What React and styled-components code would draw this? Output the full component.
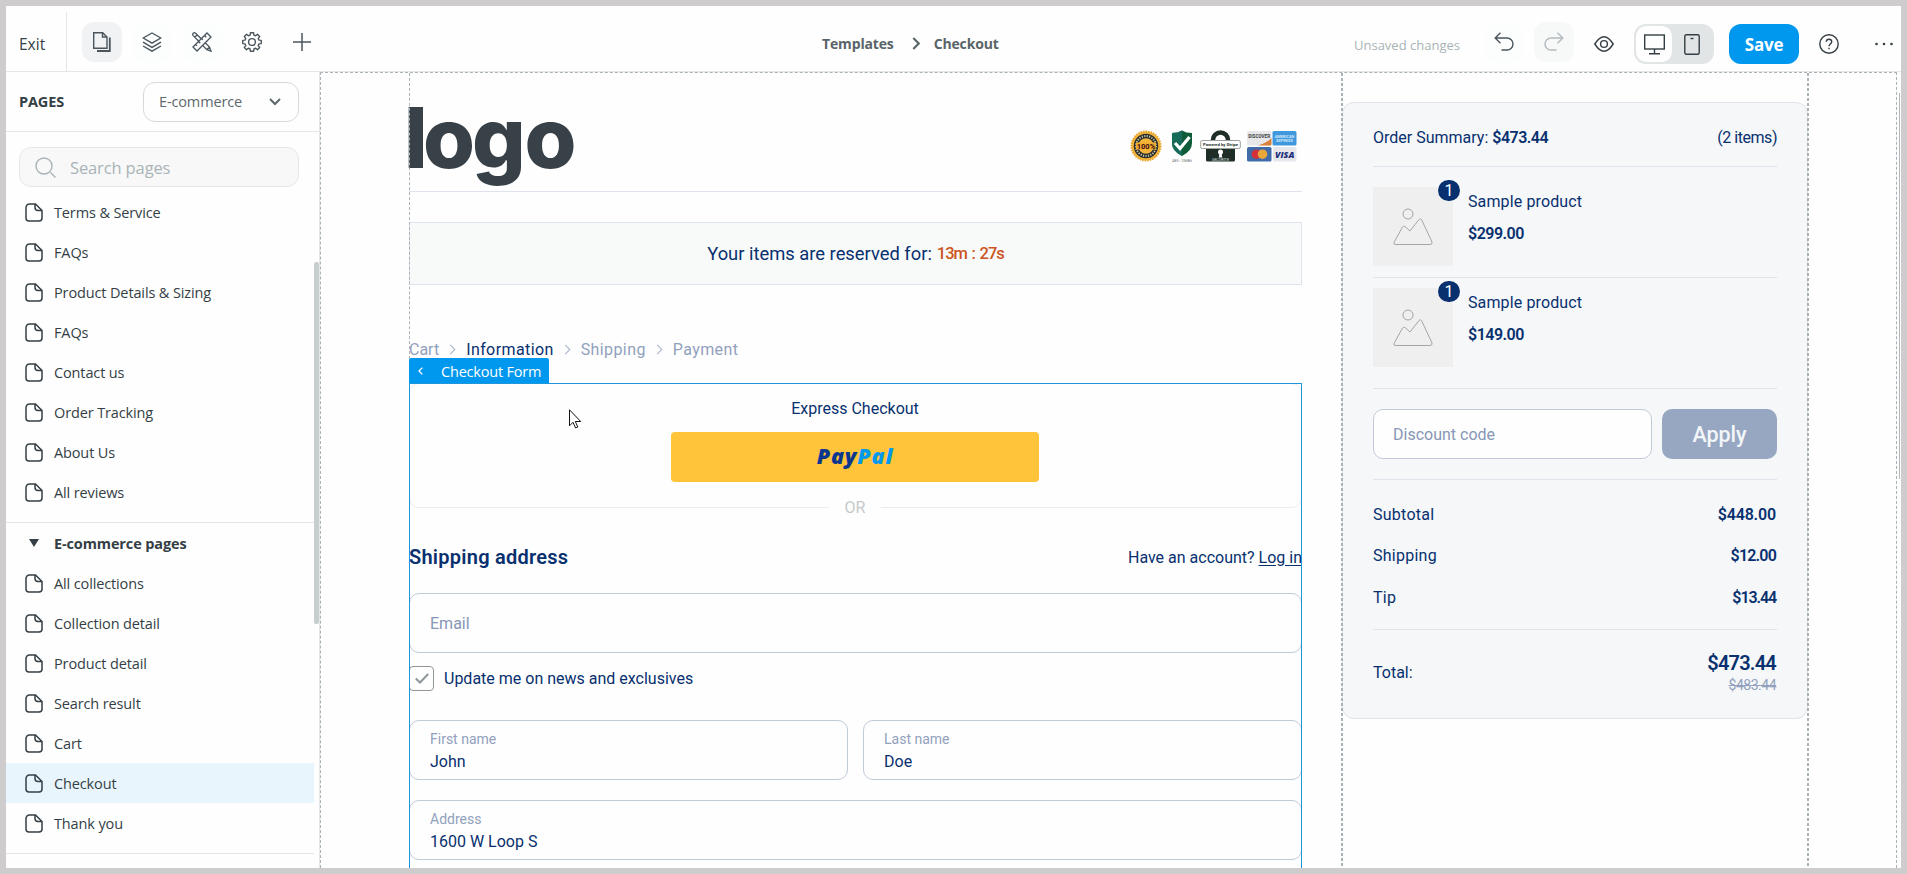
import React from "react";
import styled, { createGlobalStyle } from "styled-components";

const ui = `"Open Sans", "Noto Sans", sans-serif`;
const shop = `Roboto, "Noto Sans", sans-serif`;
const c = {
  ink: "#343f45",
  icon: "#4b565c",
  line: "#e4e6e8",
  dash: "#a9b2b6",
  blue: "#0097ee",
  navy: "#08306f",
  muted: "#91a1bd",
  field: "#c1cad9",
  rule: "#dfe3ec",
};

const Global = createGlobalStyle`
  *, *::before, *::after { box-sizing: border-box; }
  body { margin: 0; background: #cfcccd; font-family: ${ui}; color: ${c.ink}; overflow: hidden; }
  svg { display: block; flex: none; }
`;

const Frame = styled.div`
  width: 1907px;
  height: 874px;
  padding: 6px;
  background: #cfcccd;
`;
const Window = styled.div`
  display: flex;
  flex-direction: column;
  width: 1895px;
  height: 862px;
  background: #fefefe;
  overflow: hidden;
`;

/* top bar */
const TopBar = styled.header`
  display: flex;
  flex: none;
  height: 66px;
  border-bottom: 1px solid ${c.line};
`;
const Exit = styled.div`
  width: 61px;
  margin-top: 6px;
  padding: 20px 0 0 13px;
  border-right: 1px solid ${c.line};
  font-size: 15.5px;
  line-height: 24px;
`;
const Tools = styled.nav`
  display: flex;
  gap: 10px;
  margin: 16px 0 0 15px;
`;
const ToolButton = styled.div`
  display: flex;
  align-items: center;
  justify-content: center;
  width: 40px;
  height: 40px;
  border-radius: 12px;
  color: ${(p) => p.$color || c.icon};
  background: ${(p) => p.$bg || "transparent"};
`;
const Path = styled.div`
  display: flex;
  align-items: center;
  height: 24px;
  margin: 25px 0 0 500px;
  font-size: 14px;
  font-weight: 700;
  letter-spacing: -0.15px;
  color: #596469;
  svg { margin: 0 14px 0 18px; }
`;
const Actions = styled.div`
  display: flex;
  align-items: center;
  height: 40px;
  margin: 18px 8px 0 auto;
`;
const Unsaved = styled.span`
  width: 130px;
  padding-top: 2px;
  font-size: 13px;
  color: #a9b4b7;
`;
const History = styled.div`
  display: flex;
  gap: 10px;
  margin: -5px 20px 0 0;
`;
const Devices = styled.div`
  display: flex;
  align-items: center;
  width: 80px;
  height: 40px;
  margin: 0 15px 0 20px;
  padding: 2px;
  border-radius: 12px;
  background: #e1e5e6;
  color: ${c.ink};
`;
const Device = styled.div`
  display: flex;
  align-items: center;
  justify-content: center;
  width: ${(p) => (p.$on ? 36 : 40)}px;
  height: 36px;
  border-radius: 10px;
  background: ${(p) => (p.$on ? "#fefefe" : "transparent")};
`;
const Save = styled.div`
  width: 70px;
  height: 40px;
  margin-right: 20px;
  border-radius: 12px;
  background: ${c.blue};
  color: #fff;
  font-size: 17px;
  font-weight: 700;
  letter-spacing: -0.2px;
  line-height: 41px;
  text-align: center;
`;
const More = styled.div`
  margin-left: 36px;
`;

/* sidebar */
const Body = styled.div`
  display: flex;
  flex: 1;
  min-height: 0;
`;
const Sidebar = styled.aside`
  flex: none;
  width: 314px;
  border-right: 1px solid ${c.line};
  font-size: 14.5px;
  letter-spacing: -0.13px;
`;
const SideHead = styled.div`
  display: flex;
  align-items: center;
  justify-content: space-between;
  height: 60px;
  padding: 0 20px 0 13px;
  border-bottom: 1px solid ${c.line};
  strong { font-weight: 700; }
`;
const Select = styled.div`
  display: flex;
  align-items: center;
  justify-content: space-between;
  width: 156px;
  height: 40px;
  padding: 0 17px 0 15px;
  border: 1px solid #d6d9dc;
  border-radius: 12px;
  color: #5d686d;
`;
const Search = styled.div`
  display: flex;
  align-items: center;
  gap: 14px;
  width: 280px;
  height: 40px;
  margin: 15px 0 5px 13px;
  padding-left: 15px;
  border: 1px solid #e4e7e8;
  border-radius: 12px;
  background: #f8f8f8;
  font-size: 16.5px;
  color: #a9b4b7;
`;
const ListArea = styled.div`
  display: flex;
`;
const Lists = styled.div`
  width: 308px;
`;
const PageList = styled.div`
  padding-bottom: 10px;
  border-bottom: 1px solid ${c.line};
`;
const PageRow = styled.div`
  display: flex;
  align-items: center;
  gap: 11px;
  height: 40px;
  padding-left: 19px;
  background: ${(p) => (p.$active ? "#e8f5fd" : "transparent")};
  font-weight: ${(p) => (p.$group ? 700 : 400)};
`;
const SideThumb = styled.div`
  width: 5px;
  height: 362px;
  margin-top: 70px;
  border-radius: 2px;
  background: #c8cdd0;
`;

/* canvas */
const Canvas = styled.main`
  display: flex;
  flex: none;
  width: 1577px;
  padding-left: 88px;
  border: 1px dashed ${c.dash};
  border-bottom: 0;
  overflow: hidden;
  font-family: ${shop};
  font-size: 16px;
  color: ${c.navy};
`;
const CanvasScroll = styled.div`
  width: 1px;
  height: 386px;
  margin: 21px 0 0 2px;
  background: #b4b8ba;
`;
const Column = styled.section`
  position: relative;
  width: 893px;
  flex: none;
  &::after {
    content: "";
    position: absolute;
    left: 0;
    top: 0;
    height: 286px;
    border-left: 1px dashed ${c.dash};
  }
`;
const StoreHeader = styled.div`
  display: flex;
  justify-content: space-between;
  height: 119px;
  border-bottom: 1px solid ${c.rule};
  > svg { overflow: visible; }
`;
const Trust = styled.div`
  display: flex;
  align-items: flex-start;
  padding: 57px 5px 0 0;
`;
const Spacer = styled.div`
  width: ${(p) => p.$w}px;
`;
const Timer = styled.div`
  display: flex;
  align-items: center;
  justify-content: center;
  gap: 5px;
  height: 63px;
  margin-top: 30px;
  border: 1px solid ${c.rule};
  background: #f8fafa;
  font-size: 18.35px;
  b {
    font-size: 16.5px;
    font-weight: 500;
    letter-spacing: -1px;
    word-spacing: 1.5px;
    color: #cb5420;
  }
`;
const Steps = styled.div`
  display: flex;
  align-items: center;
  height: 25px;
  margin-top: 52px;
  color: ${c.muted};
  b { font-weight: 450; color: ${c.navy}; letter-spacing: 0.4px; }
  span { letter-spacing: 0.4px; }
  svg { margin: 0 10px; }
`;
const Form = styled.div`
  position: relative;
  height: 500px;
  margin-top: 21px;
  &::after {
    content: "";
    position: absolute;
    inset: 0;
    border: 1px solid #1e96dc;
  }
`;
const Tag = styled.div`
  position: absolute;
  left: 0;
  top: -25px;
  display: flex;
  align-items: center;
  gap: 18px;
  width: 140px;
  height: 26px;
  padding-left: 9px;
  border-radius: 2px 2px 0 0;
  background: ${c.blue};
  color: #fff;
  font: 14.5px ${ui};
  letter-spacing: -0.2px;
  white-space: nowrap;
`;
const Express = styled.div`
  position: relative;
  display: flex;
  flex-direction: column;
  align-items: center;
  height: 125px;
  padding: 15px 1px 0 0;
  border: 1px solid #ececee;
  border-radius: 10px;
  line-height: 20px;
`;
const PayPal = styled.div`
  width: 368px;
  height: 50px;
  margin-top: 13px;
  border-radius: 4px;
  background: #ffc439;
  color: #0b3690;
  font: italic 800 21.5px/47px "Open Sans", sans-serif;
  letter-spacing: 0.8px;
  text-align: center;
  span { color: #0099ec; }
`;
const Or = styled.div`
  position: absolute;
  left: 419px;
  bottom: -11px;
  width: 52px;
  background: #fefefe;
  color: #c5c9ca;
  text-align: center;
`;
const AddressHead = styled.div`
  display: flex;
  align-items: center;
  justify-content: space-between;
  height: 85px;
  padding-top: 13px;
  h2 { margin: 0; font-size: 20px; font-weight: 600; letter-spacing: 0.25px; }
  u { text-underline-offset: 2px; }
`;
const Field = styled.div`
  display: flex;
  flex-direction: column;
  justify-content: center;
  flex: 1;
  height: 60px;
  padding: 1px 20px 0;
  border: 1px solid ${c.field};
  border-radius: 10px;
  line-height: 23px;
  color: ${(p) => (p.$empty ? "#8797b5" : c.navy)};
  small { font-size: 14px; line-height: 22px; color: ${c.muted}; }
`;
const FieldRow = styled.div`
  display: flex;
  gap: 15px;
  margin-top: ${(p) => p.$top}px;
`;
const CheckRow = styled.div`
  display: flex;
  align-items: center;
  gap: 10px;
  height: 25px;
  margin-top: 13px;
`;
const CheckBox = styled.div`
  display: flex;
  align-items: center;
  justify-content: center;
  width: 25px;
  height: 25px;
  border: 1px solid #8f979b;
  border-radius: 4px;
`;
const Pointer = styled.div`
  position: absolute;
  left: 160px;
  top: 26px;
`;

/* order summary */
const SummaryPane = styled.section`
  position: relative;
  flex: none;
  width: 468px;
  margin-left: 39px;
  padding: 29px 1px 0;
  &::before,
  &::after {
    content: "";
    position: absolute;
    top: 0;
    bottom: 0;
    width: 2px;
    background: repeating-linear-gradient(${c.dash} 0 3px, transparent 3px 5px);
  }
  &::before { left: 0; }
  &::after { right: 0; }
`;
const Card = styled.div`
  height: 617px;
  padding: 0 30px;
  border: 1px solid #e0e4e8;
  border-radius: 12px;
  background: #f5f7f9;
`;
const Row = styled.div`
  display: flex;
  justify-content: space-between;
  align-items: center;
  height: ${(p) => p.$h}px;
  padding: ${(p) => p.$pt || 0}px 1px ${(p) => p.$pb || 0}px 0;
`;
const ItemCount = styled.span`
  margin-right: -1px;
  letter-spacing: -0.45px;
`;
const Rule = styled.div`
  height: 1px;
  background: #dfe3eb;
`;
const Money = styled.b`
  font-size: ${(p) => p.$size || 16}px;
  font-weight: 600;
  letter-spacing: ${(p) => p.$track ?? -0.5}px;
`;
const Product = styled.div`
  display: flex;
  gap: 15px;
  padding: ${(p) => p.$pad};
`;
const Thumb = styled.div`
  position: relative;
  display: flex;
  align-items: center;
  justify-content: center;
  width: 80px;
  height: 79px;
  background: #efefef;
`;
const Count = styled.span`
  position: absolute;
  right: -7px;
  top: -7px;
  width: 22px;
  height: 21px;
  border-radius: 11px;
  background: ${c.navy};
  color: #fff;
  line-height: 21px;
  text-align: center;
`;
const ProductText = styled.div`
  display: flex;
  flex-direction: column;
  gap: 12px;
  padding-top: 5px;
  line-height: 20px;
  letter-spacing: 0.12px;
`;
const Discount = styled.div`
  display: flex;
  gap: 10px;
  height: 90px;
  padding: 20px 0;
`;
const CodeInput = styled.div`
  width: 279px;
  height: 50px;
  padding-left: 19px;
  border: 1px solid ${c.field};
  border-radius: 10px;
  background: #fefefe;
  color: #8797b5;
  line-height: 49px;
`;
const Apply = styled.div`
  flex: 1;
  border-radius: 10px;
  background: #97a7c1;
  color: #f3f6f9;
  font-size: 21.5px;
  font-weight: 500;
  line-height: 51px;
  text-align: center;
`;
const Label = styled.span`
  letter-spacing: 0.25px;
`;
const Totals = styled.div`
  display: flex;
  flex-direction: column;
  align-items: flex-end;
  s { font-size: 14px; letter-spacing: -0.5px; line-height: 20px; color: ${c.muted}; }
`;

const Svg = ({ w, h = w, vb, sw = 1.4, children }) => (
  <svg width={w} height={h} viewBox={vb || `0 0 ${w} ${h}`} fill="none" stroke="currentColor" strokeWidth={sw}>
    {children}
  </svg>
);

const FileIcon = () => (
  <Svg w={18} h={19} sw={1.5}>
    <path d="M4.5 1h6L17 7.5V15a3 3 0 0 1-3 3H4a3 3 0 0 1-3-3V4.5A3.5 3.5 0 0 1 4.5 1Z" />
    <path d="M10 1v3.5A3 3 0 0 0 13 7.5h4" />
  </Svg>
);
const Chevron = ({ color, w = 7, h = 11, sw = 1.2 }) => (
  <svg width={w} height={h} viewBox="0 0 7 12" fill="none" stroke={color} strokeWidth={sw}>
    <path d="M1 1l5 5-5 5" />
  </svg>
);
const PicIcon = () => (
  <svg width="40" height="38" viewBox="0 0 40 38" fill="none" stroke="#a3a5a6" strokeWidth="1">
    <circle cx="15" cy="6" r="5" />
    <path d="M1 34.5 9.5 19q1-1.5 2.5-.5l5 4.5L26 11.5q1.5-1.5 2.5 0L39 34q.5 2.5-2 2.5H3Q0 36.5 1 34.5Z" />
  </svg>
);

const gearPath = (() => {
  const pts = [];
  for (let i = 0; i < 8; i++) {
    const a = (i * Math.PI) / 4;
    [[-0.27, 7.2], [-0.17, 9.4], [0.17, 9.4], [0.27, 7.2]].forEach(([d, r]) =>
      pts.push(`${(10 + r * Math.sin(a + d)).toFixed(2)} ${(10 - r * Math.cos(a + d)).toFixed(2)}`)
    );
  }
  return `M${pts.join("L")}Z`;
})();

const Guarantee = () => (
  <svg width="32" height="32" viewBox="0 0 32 32">
    <circle cx="16" cy="16" r="14.5" fill="#f4b63a" stroke="#e9a42c" strokeWidth="2" strokeDasharray="1.5 1" />
    <circle cx="16" cy="16" r="10" fill="none" stroke="#2b2f2c" strokeWidth="4.5" />
    <circle cx="16" cy="16" r="10" fill="none" stroke="#c8c3a8" strokeWidth="2" strokeDasharray="1.2 1.3" />
    <rect x="6" y="12.5" width="20" height="7" fill="#f0ad31" />
    <text x="16" y="18.7" fontSize="7.5" fontWeight="800" textAnchor="middle" fill="#4b1616" fontFamily="Roboto">100%</text>
  </svg>
);
const Shield = () => (
  <svg width="22" height="32" viewBox="0 0 22 32">
    <path d="M1 3q6 0 10-2.5Q15 3 21 3v10q0 8-10 13Q1 21 1 13Z" fill="#0f5c3a" />
    <path d="M1 3q6 0 10-2.5V26Q1 21 1 13Z" fill="#176b5a" />
    <path d="M4 13l5 5.5L18.5 7" fill="none" stroke="#fff" strokeWidth="3.2" />
    <text x="11" y="31.5" fontSize="3.6" textAnchor="middle" fill="#666" fontFamily="Roboto">AES - 256Bit</text>
  </svg>
);
const Lock = () => (
  <svg width="41" height="32" viewBox="0 0 41 32">
    <path d="M13 13v-3a7.5 7.5 0 0 1 15 0v3" fill="none" stroke="#1f2e27" strokeWidth="4.5" />
    <rect x="6" y="15" width="29" height="16.5" rx="1.5" fill="#1f2e27" />
    <rect x=".7" y="10.5" width="39.6" height="8" rx="1.5" fill="#fff" stroke="#9aa19d" />
    <text x="20.5" y="16.3" fontSize="4.3" fontWeight="700" textAnchor="middle" fill="#26332d" fontFamily="Roboto">Powered by Stripe</text>
    <circle cx="20.5" cy="22" r="2.5" fill="#fff" />
    <path d="M19.5 22h2l.7 5.5h-3.4Z" fill="#fff" />
    <text x="20.5" y="31" fontSize="3.8" textAnchor="middle" fill="#dfe5e1" fontFamily="Roboto">SECURITE</text>
  </svg>
);
const Cards = () => (
  <svg width="50" height="32" viewBox="0 0 50 32">
    <rect x="0" y="1" width="24.5" height="14.5" rx="1.5" fill="#e7e7ea" />
    <path d="M24.5 8v6q0 1.5-1.5 1.5H11Q20 13 24.5 8Z" fill="#d9803a" />
    <text x="12.2" y="7.7" fontSize="4.6" fontWeight="700" textAnchor="middle" fill="#3b3b42" fontFamily="Roboto">DISCOVER</text>
    <rect x="25.5" y="1" width="24" height="14.5" rx="1.5" fill="#3f97dc" />
    <text x="37.5" y="8" fontSize="3.9" fontWeight="700" textAnchor="middle" fill="#d2eafb" fontFamily="Roboto">AMERICAN</text>
    <text x="37.5" y="12.3" fontSize="3.9" fontWeight="700" textAnchor="middle" fill="#d2eafb" fontFamily="Roboto">EXPRESS</text>
    <rect x="0" y="17" width="24.5" height="14.5" rx="1.5" fill="#3f6ca8" />
    <circle cx="9.3" cy="24.2" r="4.8" fill="#d2303a" />
    <circle cx="15.5" cy="24.2" r="4.8" fill="#eba63a" />
    <rect x="26" y="17" width="23.5" height="14.5" rx="1.5" fill="#e6e7ec" />
    <text x="37.7" y="27.5" fontSize="8.8" fontStyle="italic" fontWeight="800" textAnchor="middle" fill="#1d2f7a" fontFamily="Open Sans">VISA</text>
  </svg>
);

const pages = ["Terms & Service", "FAQs", "Product Details & Sizing", "FAQs", "Contact us", "Order Tracking", "About Us", "All reviews"];
const shopPages = ["All collections", "Collection detail", "Product detail", "Search result", "Cart", "Checkout", "Thank you"];

const Item = ({ price }) => (
  <>
    <Thumb><PicIcon /><Count>1</Count></Thumb>
    <ProductText><span>Sample product</span><Money>{price}</Money></ProductText>
  </>
);

export default function App() {
  return (
    <Frame>
      <Global />
      <Window>
        <TopBar>
          <Exit>Exit</Exit>
          <Tools>
            <ToolButton $bg="#f0f2f4">
              <Svg w={18} h={20}>
                <path d="M.7.7h9L14 5v11.300H.7Z" /><path d="M9.5.7V5H14" /><path d="M16.8 5.5V19H4" strokeWidth="1.8" />
              </Svg>
            </ToolButton>
            <ToolButton $bg="#fcfefe">
              <Svg w={20}>
                <path d="M10 1l8.8 5L10 11.2 1.2 6Z" /><path d="M1 10.2l9 5.2 9-5.2" /><path d="M1 14l9 5.2 9-5.2" />
              </Svg>
            </ToolButton>
            <ToolButton $bg="#fcfefe">
              <Svg w={20} sw={1.3}>
                <path d="M1 15l14-14 4 4L5 19ZM12.5 3.5l1.8 1.8M9.500 6.500l1.300 1.300M6.500 9.500l1.800 1.800M3.500 12.500l1.300 1.300" />
                <path d="M6.800 9.200L1.200 3.600a1.700 1.700 0 0 1 2.400-2.400L9.200 6.800M13.200 10.800l4.300 4.300 1.500 4.100-4.100-1.500-4.300-4.300M2.800 5.200l2.400-2.400M14.900 17.500l2.600-2.400" />
              </Svg>
            </ToolButton>
            <ToolButton>
              <Svg w={20}><path d={gearPath} strokeLinejoin="round" /><circle cx="10" cy="10" r="3.4" /></Svg>
            </ToolButton>
            <ToolButton>
              <Svg w={18} sw={1.5}><path d="M9 0v18M0 9h18" /></Svg>
            </ToolButton>
          </Tools>
          <Path>
            Templates
            <Chevron color="#596469" sw={1.9} w={8} h={13} />
            Checkout
          </Path>
          <Actions>
            <Unsaved>Unsaved changes</Unsaved>
            <History>
              <ToolButton $bg="#fcfefe">
                <Svg w={20}><path d="M6.5.8L1.2 6l5.300 5.200M1.200 6H13a6 6 0 0 1 0 12H7.500" /></Svg>
              </ToolButton>
              <ToolButton $bg="#f7f8f8" $color="#b3bbbe">
                <Svg w={20}><path d="M13.5.8L18.8 6l-5.300 5.200M18.800 6H7a6 6 0 0 0 0 12h5.500" /></Svg>
              </ToolButton>
            </History>
            <Svg w={20} h={16}><path d="M.8 8Q10-6.500 19.200 8 10 22.500.8 8Z" /><circle cx="10" cy="8" r="3.4" /></Svg>
            <Devices>
              <Device $on>
                <Svg w={21} h={21}><rect x=".7" y="1" width="19.6" height="14" /><path d="M10.5 15v4.500M5 19.700h11" /></Svg>
              </Device>
              <Device>
                <Svg w={16} h={21}><rect x=".8" y=".8" width="14.4" height="19.4" rx="1.5" /><path d="M6.5 4.500h3" /></Svg>
              </Device>
            </Devices>
            <Save>Save</Save>
            <Svg w={20}>
              <circle cx="10" cy="10" r="9.2" />
              <path d="M7.3 7.8Q7.4 5.2 10 5.2t2.700 2.500c0 2.200-2.700 2.300-2.700 4.500M10 13.700v1.500" />
            </Svg>
            <More>
              <svg width="18" height="4" viewBox="0 0 18 4" fill={c.ink}>
                <circle cx="1.5" cy="2" r="1.3" /><circle cx="9" cy="2" r="1.3" /><circle cx="16.5" cy="2" r="1.3" />
              </svg>
            </More>
          </Actions>
        </TopBar>
        <Body>
          <Sidebar>
            <SideHead>
              <strong>PAGES</strong>
              <Select>
                E-commerce
                <Svg w={12} h={8} sw={2}><path d="M1 1l5 5 5-5" /></Svg>
              </Select>
            </SideHead>
            <Search>
              <Svg w={21}><circle cx="9" cy="9" r="8" /><path d="M15.5 15.5l5 5" /></Svg>
              Search pages
            </Search>
            <ListArea>
              <Lists>
                <PageList>
                  {pages.map((p, i) => <PageRow key={i}><FileIcon />{p}</PageRow>)}
                </PageList>
                <PageList>
                  <PageRow $group>
                    <svg width="18" height="8" viewBox="0 0 18 8" fill={c.ink}><path d="M4 0h10L9 8Z" /></svg>
                    E-commerce pages
                  </PageRow>
                  {shopPages.map((p) => <PageRow key={p} $active={p === "Checkout"}><FileIcon />{p}</PageRow>)}
                </PageList>
              </Lists>
              <SideThumb />
            </ListArea>
          </Sidebar>
          <Canvas>
            <Column>
              <StoreHeader>
                <svg width="170" height="118" viewBox="0 0 170 118">
                  <text x="-5 14 63 115.5" y="95" fontFamily="Inter" fontWeight="800" fontSize="84" fill="#384147">logo</text>
                </svg>
                <Trust>
                  <Guarantee />
                  <Spacer $w={9} /><Shield />
                  <Spacer $w={7} /><Lock />
                  <Spacer $w={6} /><Cards />
                </Trust>
              </StoreHeader>
              <Timer>Your items are reserved for: <b>13m : 27s</b></Timer>
              <Steps>
                Cart<Chevron color="#aab7cc" />
                <b>Information</b><Chevron color="#aab7cc" />
                <span>Shipping</span><Chevron color="#aab7cc" /><span>Payment</span>
              </Steps>
              <Form>
                <Express>
                  Express Checkout
                  <PayPal>Pay<span>Pal</span></PayPal>
                  <Or>OR</Or>
                </Express>
                <AddressHead>
                  <h2>Shipping address</h2>
                  <span>Have an account? <u>Log in</u></span>
                </AddressHead>
                <FieldRow $top={0}><Field $empty>Email</Field></FieldRow>
                <CheckRow>
                  <CheckBox>
                    <svg width="14" height="11" viewBox="0 0 14 11" fill="none" stroke="#8f979b" strokeWidth="2"><path d="M.8 5.5L5 9.5 13.2 1" /></svg>
                  </CheckBox>
                  Update me on news and exclusives
                </CheckRow>
                <FieldRow $top={29}>
                  <Field><small>First name</small>John</Field>
                  <Field><small>Last name</small>Doe</Field>
                </FieldRow>
                <FieldRow $top={20}><Field><small>Address</small>1600 W Loop S</Field></FieldRow>
                <Tag>
                  <svg width="5" height="8" viewBox="0 0 5 8" fill="none" stroke="#fff" strokeWidth="1.3"><path d="M4.3.6L1 4l3.300 3.400" /></svg>
                  Checkout Form
                </Tag>
                <Pointer>
                  <svg width="13" height="20" viewBox="0 0 13 20" fill="#fff" stroke="#111" strokeWidth="1"><path d="M.5.8v16l3.500-3.500 2.600 5.700 2.200-1-2.500-5.500h5.400Z" /></svg>
                </Pointer>
              </Form>
            </Column>
            <SummaryPane>
              <Card>
                <Row $h={63} $pt={6}>
                  <span>Order Summary: <Money $track={-0.5}>$473.44</Money></span>
                  <ItemCount>(2 items)</ItemCount>
                </Row>
                <Rule />
                <Product $pad="20px 0 11px"><Item price="$299.00" /></Product>
                <Rule />
                <Product $pad="10px 0 21px"><Item price="$149.00" /></Product>
                <Rule />
                <Discount><CodeInput>Discount code</CodeInput><Apply>Apply</Apply></Discount>
                <Rule />
                <Row $h={55} $pt={13}><Label>Subtotal</Label><Money $track={-0.15}>$448.00</Money></Row>
                <Row $h={41}><Label>Shipping</Label><Money $track={-0.8}>$12.00</Money></Row>
                <Row $h={53} $pb={11}><Label>Tip</Label><Money $track={-1.1}>$13.44</Money></Row>
                <Rule />
                <Row $h={86} $pb={1}>
                  Total:
                  <Totals><Money $size={20} $track={-0.8}>$473.44</Money><s>$483.44</s></Totals>
                </Row>
              </Card>
            </SummaryPane>
          </Canvas>
          <CanvasScroll />
        </Body>
      </Window>
    </Frame>
  );
}
